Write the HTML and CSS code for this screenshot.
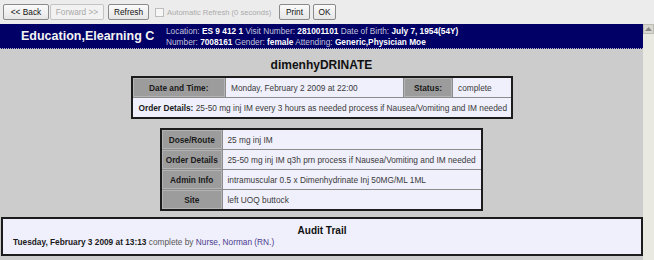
FILE: index.html
```html
<!DOCTYPE html>
<html>
<head>
<meta charset="utf-8">
<link rel="stylesheet" href="styles.css">
</head>
<body>
<div class="toolbar">
  <button class="btn btn-back">&lt;&lt; Back</button>
  <button class="btn btn-fwd" disabled>Forward &gt;&gt;</button>
  <button class="btn btn-refresh">Refresh</button>
  <label class="auto"><span class="check"></span>Automatic Refresh (0 seconds)</label>
  <button class="btn btn-print">Print</button>
  <button class="btn btn-ok">OK</button>
</div>
<div class="main">
  <div class="content">
    <div class="banner">
      <div class="name">Education,Elearning C</div>
      <div class="info">
        <div><span class="lbl">Location:</span> <b>ES 9 412 1</b> <span class="lbl">Visit Number:</span> <b>281001101</b> <span class="lbl">Date of Birth:</span> <b>July 7, 1954(54Y)</b></div>
        <div><span class="lbl">Number:</span> <b>7008161</b> <span class="lbl">Gender:</span> <b>female</b> <span class="lbl">Attending:</span> <b>Generic,Physician Moe</b></div>
      </div>
    </div>
    <div class="title">dimenhyDRINATE</div>
    <table class="grid t1">
      <colgroup><col class="c1"><col class="c2"><col class="c3"><col class="c4"></colgroup>
      <tr>
        <th>Date and Time:</th>
        <td>Monday, February 2 2009 at 22:00</td>
        <th>Status:</th>
        <td>complete</td>
      </tr>
      <tr>
        <td colspan="4" class="od"><b>Order Details:</b> 25-50 mg inj IM every 3 hours as needed process if Nausea/Vomiting and IM needed</td>
      </tr>
    </table>
    <table class="grid t2">
      <colgroup><col class="d1"><col class="d2"></colgroup>
      <tr><th>Dose/Route</th><td>25 mg inj IM</td></tr>
      <tr><th>Order Details</th><td>25-50 mg inj IM q3h prn process if Nausea/Vomiting and IM needed</td></tr>
      <tr><th>Admin Info</th><td>intramuscular 0.5 x Dimenhydrinate Inj 50MG/ML 1ML</td></tr>
      <tr><th>Site</th><td>left UOQ buttock</td></tr>
    </table>
    <div class="audit">
      <div class="audit-title">Audit Trail</div>
      <div class="audit-line"><b>Tuesday, February 3 2009 at 13:13</b> <span class="by">complete by</span> <span class="who">Nurse, Norman (RN.)</span></div>
    </div>
  </div>
  <div class="scroll"><div class="arrow"><svg width="7" height="4" viewBox="0 0 7 4"><path d="M0 4 L3.5 0 L7 4 Z" fill="#888"/></svg></div></div>
</div>
</body>
</html>
```
FILE: styles.css
```css
html, body {
  margin: 0;
  padding: 0;
}
body {
  width: 654px;
  height: 260px;
  overflow: hidden;
  background: #cccccc;
  font-family: "Liberation Sans", Arial, sans-serif;
  font-size: 8.3px;
  color: #333;
}
.toolbar {
  height: 24px;
  background: #ececec;
  display: flex;
  align-items: center;
  padding-left: 3px;
  box-sizing: border-box;
}
.btn {
  font-family: "Liberation Sans", Arial, sans-serif;
  font-size: 8.3px;
  height: 16px;
  padding: 0;
  margin: 0;
  border: 1px solid #8a8a8a;
  border-radius: 2px;
  background: linear-gradient(#fbfbfb, #e6e6e6);
  color: #111;
  box-sizing: border-box;
  flex: none;
}
.btn-back { width: 46px; }
.btn-fwd { width: 54px; margin-left: 1px; color: #a8a8a8; border-color: #c4c4c4; background: #f2f2f2; }
.btn-refresh { width: 41px; margin-left: 4px; }
.btn-print { width: 31px; margin-left: 6px; }
.btn-ok { width: 23px; margin-left: 3px; }
.auto {
  display: flex;
  align-items: center;
  margin-left: 6px;
  color: #ababab;
  width: 118px;
  font-size: 7.6px;
  white-space: nowrap;
  overflow: hidden;
  flex: none;
}
.check {
  width: 9px;
  height: 9px;
  border: 1px solid #bdbdbd;
  background: #f6f6f6;
  margin-right: 3px;
  box-sizing: border-box;
  flex: none;
}
.main {
  display: flex;
  height: 236px;
}
.content {
  width: 643px;
  display: flex;
  flex-direction: column;
}
.banner {
  height: 24px;
  background: #000066;
  display: flex;
  align-items: center;
  border-bottom: 1px dotted #b8b8c8;
}
.name {
  font-size: 12.5px;
  font-weight: bold;
  color: #f4f4f4;
  margin-left: 21px;
  width: 145px;
}
.info {
  color: #fff;
  line-height: 11px;
  padding-top: 1px;
}
.info b { color: #fff; }
.lbl { color: #c4c4dc; }
.title {
  font-size: 12px;
  font-weight: bold;
  color: #111;
  text-align: center;
  margin-top: 8px;
  height: 16px;
  line-height: 16px;
}
.grid {
  border-collapse: collapse;
  table-layout: fixed;
  margin: 3px auto 0;
  border: 2px solid #1c1c1c;
}
.grid th, .grid td {
  height: 19px;
  padding: 0 0 0 5px;
  border: 1px solid #8c8c8c;
  font-size: 8.3px;
  text-align: left;
  white-space: nowrap;
  overflow: hidden;
}
.grid td { background: #f0f0fc; color: #3a3a3a; }
.grid th {
  background: #9c9c9c;
  color: #1a1a1a;
  text-align: center;
  padding: 0;
  box-shadow: inset 0 0 0 1px #b4b4b4;
}
.t1 { width: 382px; }
.c1 { width: 94px; }
.c2 { width: 178px; }
.c3 { width: 49px; }
.c4 { width: 59px; }
.grid td.od { padding-left: 6px; }
.grid td.od b { color: #1a1a1a; }
.t2 { width: 323px; margin-top: 9px; }
.d1 { width: 61px; }
.d2 { width: 260px; }
.audit {
  margin: 6px 0 0 1px;
  width: 642px;
  height: 39px;
  box-sizing: border-box;
  border: 2px solid #1c1c1c;
  background: #f0f0fc;
}
.audit-title {
  font-size: 10px;
  font-weight: bold;
  color: #111;
  text-align: center;
  margin-top: 6px;
  line-height: 12px;
}
.audit-line {
  margin-left: 10px;
  line-height: 11px;
}
.audit-line b { color: #1a1a1a; }
.by { color: #555; }
.who { color: #4a3c8c; }
.scroll {
  width: 11px;
  background: #e9e9e2;
  display: flex;
  flex-direction: column;
}
.arrow {
  height: 10px;
  background: #d8d6cf;
  border: 1px solid #bdbcb5;
  box-sizing: border-box;
  display: flex;
  align-items: center;
  justify-content: center;
}
```
